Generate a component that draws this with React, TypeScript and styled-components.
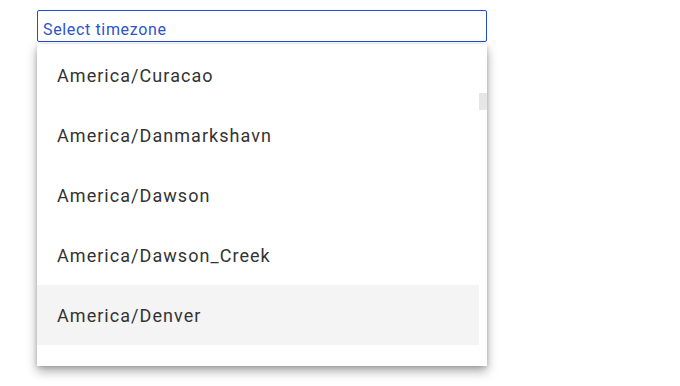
import React from "react";
import styled, { createGlobalStyle } from "styled-components";

const Global = createGlobalStyle`
  html, body { margin: 0; padding: 0; background: #fff; }
  body { font-family: Roboto, "Noto Sans", sans-serif; }
`;

const Page = styled.div`
  padding: 10px 0 20px 37px;
  width: 450px;
`;

const Field = styled.div`
  box-sizing: border-box;
  height: 32px;
  border: 1px solid #1a4fd1;
  border-radius: 2px;
  padding: 8px 0 0 5px;
  font-size: 16px;
  line-height: 22px;
  letter-spacing: 0.65px;
  color: #2a55cf;
`;

const Menu = styled.div`
  position: relative;
  margin-top: 2px;
  height: 322px;
  background: #fff;
  box-shadow: 0 5px 10px rgba(0, 0, 0, 0.35), 0 1px 4px rgba(0, 0, 0, 0.15);
  overflow: hidden;
  padding-top: 1px;
  box-sizing: border-box;
`;

const Item = styled.div<{ $active?: boolean }>`
  height: 60px;
  margin-right: 8px;
  display: flex;
  align-items: center;
  padding-left: 20px;
  font-size: 18px;
  letter-spacing: 1.05px;
  color: #333;
  background: ${(p) => (p.$active ? "#f4f4f4" : "transparent")};
`;

const Thumb = styled.div`
  position: absolute;
  right: 0;
  top: 49px;
  width: 8px;
  height: 17px;
  background: #e6e6e6;
`;

const zones = [
  "America/Curacao",
  "America/Danmarkshavn",
  "America/Dawson",
  "America/Dawson_Creek",
  "America/Denver",
];

export default function App() {
  return (
    <>
      <Global />
      <Page>
        <Field>Select timezone</Field>
        <Menu>
          {zones.map((z) => (
            <Item key={z} $active={z === "America/Denver"}>
              {z}
            </Item>
          ))}
          <Thumb />
        </Menu>
      </Page>
    </>
  );
}
